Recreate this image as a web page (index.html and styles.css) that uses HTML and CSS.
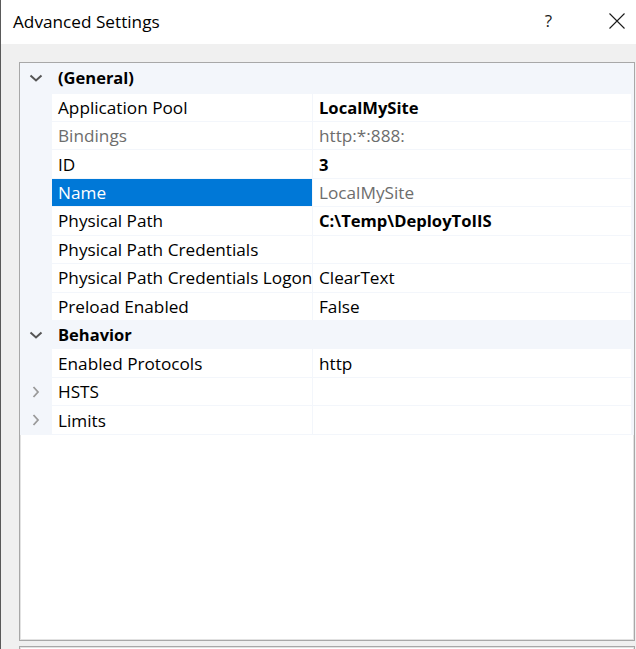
FILE: index.html
```html
<!DOCTYPE html>
<html>
<head>
<meta charset="utf-8">
<link rel="stylesheet" href="styles.css">
</head>
<body>
<div class="window">
  <div class="titlebar">
    <div class="title">Advanced Settings</div>
    <div class="title-btns">
      <span class="help">?</span>
      <svg class="close" width="16" height="16" viewBox="0 0 16 16"><path d="M0.5 0.5 L15.5 15.5 M15.5 0.5 L0.5 15.5" stroke="#1a1a1a" stroke-width="1.1" fill="none"/></svg>
    </div>
  </div>
  <div class="content">
    <div class="grid-box">
      <div class="grid">
        <div class="cat">
          <span class="tog"><svg width="14" height="8" viewBox="0 0 14 8"><path d="M1.5 1.5 L7 6.5 L12.5 1.5" stroke="#555" stroke-width="2" fill="none"/></svg></span>
          <span class="cat-name">(General)</span>
        </div>
        <div class="gut"></div><div class="name">Application Pool</div><div class="val bold">LocalMySite</div>
        <div class="gut"></div><div class="name dim">Bindings</div><div class="val dim">http:*:888:</div>
        <div class="gut"></div><div class="name">ID</div><div class="val bold">3</div>
        <div class="gut"></div><div class="name sel">Name</div><div class="val dim">LocalMySite</div>
        <div class="gut"></div><div class="name">Physical Path</div><div class="val bold">C:\Temp\DeployToIIS</div>
        <div class="gut"></div><div class="name">Physical Path Credentials</div><div class="val"></div>
        <div class="gut"></div><div class="name">Physical Path Credentials Logon</div><div class="val">ClearText</div>
        <div class="gut"></div><div class="name">Preload Enabled</div><div class="val">False</div>
        <div class="cat">
          <span class="tog"><svg width="14" height="8" viewBox="0 0 14 8"><path d="M1.5 1.5 L7 6.5 L12.5 1.5" stroke="#555" stroke-width="2" fill="none"/></svg></span>
          <span class="cat-name">Behavior</span>
        </div>
        <div class="gut"></div><div class="name">Enabled Protocols</div><div class="val">http</div>
        <div class="gut"><svg width="8" height="12" viewBox="0 0 8 12"><path d="M1.5 1 L6 6 L1.5 11" stroke="#9a9a9a" stroke-width="1.8" fill="none"/></svg></div><div class="name">HSTS</div><div class="val"></div>
        <div class="gut"><svg width="8" height="12" viewBox="0 0 8 12"><path d="M1.5 1 L6 6 L1.5 11" stroke="#9a9a9a" stroke-width="1.8" fill="none"/></svg></div><div class="name">Limits</div><div class="val"></div>
      </div>
    </div>
    <div class="desc-box"></div>
  </div>
</div>
</body>
</html>
```
FILE: styles.css
```css
html, body {
  margin: 0;
  padding: 0;
  background: #f0f0f0;
}
body {
  font-family: "Open Sans", "Noto Sans", sans-serif;
  color: #000;
}
.window {
  width: 636px;
  height: 649px;
  box-sizing: border-box;
  border-left: 1px solid #5a5a5a;
  background: #f0f0f0;
  overflow: hidden;
}
.titlebar {
  height: 44px;
  background: #fff;
  display: flex;
  align-items: center;
  justify-content: space-between;
  padding-left: 12px;
}
.title {
  font-size: 17.2px;
  color: #000;
  margin-top: -2px;
}
.title-btns {
  display: flex;
  align-items: center;
}
.help {
  font-size: 17px;
  color: #1a1a1a;
  margin-right: 57px;
  margin-top: -3px;
}
.close {
  margin-right: 11px;
  margin-top: -3px;
  display: block;
}
.content {
  padding: 18px 0 0 18px;
}
.grid-box {
  width: 616px;
  height: 579px;
  box-sizing: border-box;
  border: 1px solid #a8a8a8;
  box-shadow: inset 0 0 0 1px #e2e2e2;
  background: #fff;
}
.grid {
  display: grid;
  grid-template-columns: 32px 261px 318px;
  grid-template-rows: 29.5px;
  grid-auto-rows: 27.45px;
  row-gap: 1px;
  column-gap: 0;
  background: #f3f6fb;
  padding-bottom: 1px;
}
.cat {
  grid-column: 1 / 4;
  display: flex;
  align-items: center;
  background: #f3f6fb;
}
.tog {
  width: 32px;
  display: flex;
  justify-content: center;
  padding-left: 0;
  box-sizing: border-box;
}
.tog svg { display: block; }
.cat-name {
  font-weight: 700;
  font-size: 16.5px;
  padding-left: 6px;
}
.gut {
  background: #f3f6fb;
  display: flex;
  align-items: center;
  justify-content: center;
  padding-left: 0;
  box-sizing: border-box;
}
.gut svg { display: block; }
.name, .val {
  background: #fff;
  font-size: 17.2px;
  display: flex;
  align-items: center;
  white-space: nowrap;
  overflow: hidden;
  color: #000;
}
.name {
  padding-left: 6px;
  border-right: 1px solid #f3f6fb;
}
.val {
  padding-left: 6px;
}
.bold { font-weight: 700; font-size: 16.6px; }
.dim { color: #6d6d6d; }
.name.sel {
  background: #0078d7;
  color: #fff;
}
.desc-box {
  margin-top: 5px;
  width: 616px;
  height: 40px;
  box-sizing: border-box;
  border: 1px solid #a8a8a8;
  box-shadow: inset 0 0 0 1px #e2e2e2;
  background: #fff;
}
```
